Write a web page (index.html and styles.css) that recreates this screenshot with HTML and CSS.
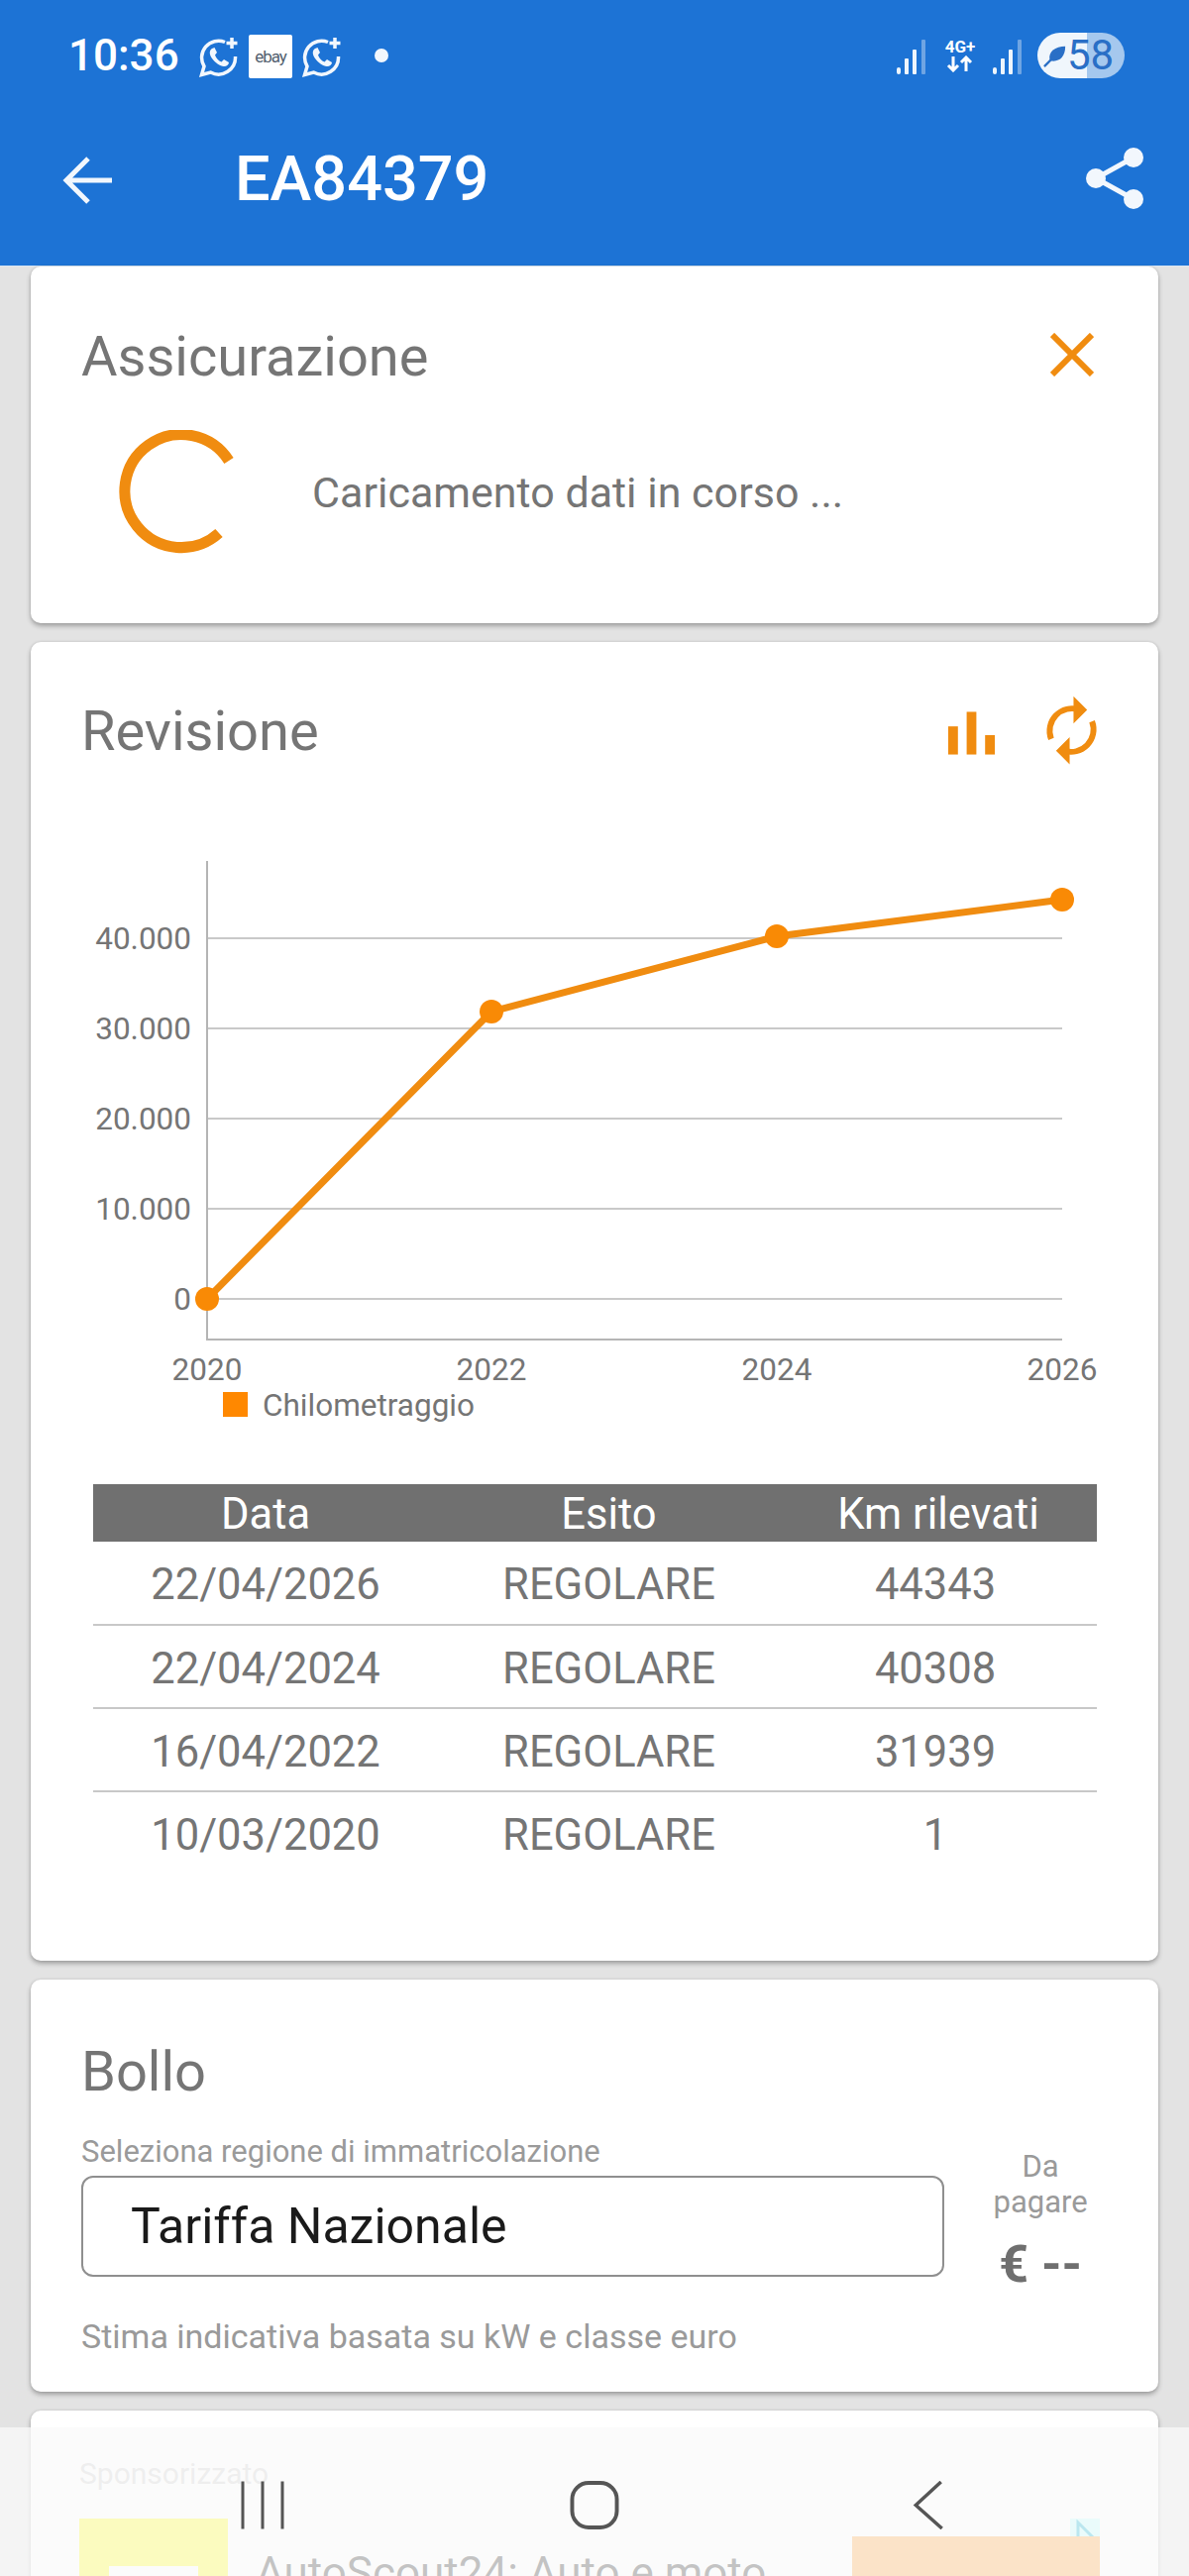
FILE: index.html
```html
<!DOCTYPE html>
<html lang="it">
<head>
  <meta charset="UTF-8">
  <meta name="viewport" content="width=device-width, initial-scale=1">
  <title>EA84379</title>
  <link rel="stylesheet" href="styles.css">
</head>
<body>
  <header class="app-bar">
    <div class="status-bar">
      <span class="clock">10:36</span>
      <svg class="notif notif-wa" viewBox="0 0 42 42">
        <path class="wa-line" d="M27 5.500A17 17 0 0 0 6 30L3.500 38.500 12.500 36A17 17 0 0 0 37.500 20"/>
        <path class="wa-fill" d="M14 12c-3 2-3 6 0 10s8 8 12 8c3 0 5-2 5-4l-5-3-2.500 2.500c-3-1-5.500-4-6.500-7l2-2.500-2.500-5z"/>
        <path class="wa-line" d="M34 1v11M28.500 6.500h11"/>
      </svg>
      <span class="ebay-icon">ebay</span>
      <svg class="notif notif-wa-2" viewBox="0 0 42 42">
        <path class="wa-line" d="M27 5.500A17 17 0 0 0 6 30L3.500 38.500 12.500 36A17 17 0 0 0 37.500 20"/>
        <path class="wa-fill" d="M14 12c-3 2-3 6 0 10s8 8 12 8c3 0 5-2 5-4l-5-3-2.500 2.500c-3-1-5.500-4-6.500-7l2-2.500-2.500-5z"/>
        <path class="wa-line" d="M34 1v11M28.500 6.500h11"/>
      </svg>
      <span class="dot"></span>
      <span class="spacer"></span>
      <svg class="signal" viewBox="0 0 31 36">
        <rect x="0" y="28" width="4" height="7" rx="2"/>
        <rect x="8" y="19" width="4" height="16" rx="1"/>
        <rect x="16" y="10" width="4" height="25" rx="1"/>
        <rect class="signal-off" x="25" y="0" width="4" height="35" rx="1"/>
      </svg>
      <div class="net">
        <span class="net-label">4G+</span>
        <svg class="net-arrows" viewBox="0 0 30 17">
          <path d="M8 1v14M3 10l5 5 5-5M21 16V2M16 7l5-5 5 5"/>
        </svg>
      </div>
      <svg class="signal" viewBox="0 0 31 36">
        <rect x="0" y="28" width="4" height="7" rx="2"/>
        <rect x="8" y="19" width="4" height="16" rx="1"/>
        <rect x="16" y="10" width="4" height="25" rx="1"/>
        <rect class="signal-off" x="25" y="0" width="4" height="35" rx="1"/>
      </svg>
      <div class="battery">
        <svg class="leaf" viewBox="0 0 26 26">
          <path d="M7 18C5 9 13 3 24 3c0 11-6 17-15 16z"/>
          <path class="leaf-stem" d="M1 25L17 9"/>
        </svg>
        <span class="battery-num">58</span>
      </div>
    </div>
    <div class="title-bar">
      <svg class="back" viewBox="0 0 52 52">
        <path d="M50 26H5M26 4L4 26l22 22"/>
      </svg>
      <h1 class="plate">EA84379</h1>
      <svg class="share" viewBox="0 0 58 64">
        <path class="share-lines" d="M48 11L10 32l38 21"/>
        <circle cx="48" cy="11" r="10"/>
        <circle cx="10" cy="32" r="10"/>
        <circle cx="48" cy="53" r="10"/>
      </svg>
    </div>
  </header>

  <main class="cards">
    <section class="card card-insurance">
      <div class="card-head">
        <h2>Assicurazione</h2>
        <svg class="icon-close" viewBox="0 0 44 44">
          <path d="M2 2l40 40M42 2L2 42"/>
        </svg>
      </div>
      <div class="loading">
        <svg class="spinner" viewBox="0 0 126 126">
          <path d="M112 31A57 57 0 1 0 102 104"/>
        </svg>
        <span>Caricamento dati in corso ...</span>
      </div>
    </section>

    <section class="card card-revision">
      <div class="card-head">
        <h2>Revisione</h2>
        <div class="head-icons">
          <svg class="icon-bars" viewBox="0 0 48 44">
            <rect x="0" y="15" width="10" height="29"/>
            <rect x="19" y="0" width="10" height="44"/>
            <rect x="38" y="24" width="10" height="20"/>
          </svg>
          <svg class="icon-refresh" viewBox="0 0 56 70">
            <path class="refresh-arc" d="M7 44A23 23 0 0 1 36 14M49 26A23 23 0 0 1 20 56"/>
            <path d="M30 0l14 14-14 14zM26 42L12 56l14 14z"/>
          </svg>
        </div>
      </div>
      <svg class="chart" viewBox="31 860 1138 580">
        <g class="chart-grid">
          <path d="M209 950H1072M209 1041H1072M209 1132H1072M209 1223H1072M209 1314H1072"/>
        </g>
        <path class="chart-axis" d="M209 872V1355H1072"/>
        <path class="chart-line" d="M209 1314L496 1024 784 948 1072 911"/>
        <g class="chart-dots">
          <circle cx="209" cy="1314" r="12"/>
          <circle cx="496" cy="1024" r="12"/>
          <circle cx="784" cy="948" r="12"/>
          <circle cx="1072" cy="911" r="12"/>
        </g>
        <g class="chart-y">
          <text x="193" y="961">40.000</text>
          <text x="193" y="1052">30.000</text>
          <text x="193" y="1143">20.000</text>
          <text x="193" y="1234">10.000</text>
          <text x="193" y="1325">0</text>
        </g>
        <g class="chart-x">
          <text x="209" y="1396">2020</text>
          <text x="496" y="1396">2022</text>
          <text x="784" y="1396">2024</text>
          <text x="1072" y="1396">2026</text>
        </g>
        <rect class="chart-key" x="225" y="1408" width="25" height="25"/>
        <text class="chart-legend" x="265" y="1432">Chilometraggio</text>
      </svg>
      <table class="km-table">
        <thead>
          <tr><th>Data</th><th>Esito</th><th>Km rilevati</th></tr>
        </thead>
        <tbody>
          <tr><td>22/04/2026</td><td>REGOLARE</td><td>44343</td></tr>
          <tr><td>22/04/2024</td><td>REGOLARE</td><td>40308</td></tr>
          <tr><td>16/04/2022</td><td>REGOLARE</td><td>31939</td></tr>
          <tr><td>10/03/2020</td><td>REGOLARE</td><td>1</td></tr>
        </tbody>
      </table>
    </section>

    <section class="card card-tax">
      <h2>Bollo</h2>
      <div class="tax-row">
        <div class="tax-left">
          <div class="tax-label">Seleziona regione di immatricolazione</div>
          <div class="tax-select">Tariffa Nazionale</div>
        </div>
        <div class="tax-right">
          <div class="tax-pay">Da pagare</div>
          <div class="tax-amount">€ --</div>
        </div>
      </div>
      <div class="tax-note">Stima indicativa basata su kW e classe euro</div>
    </section>

    <section class="card card-ad">
      <div class="ad-label">Sponsorizzato</div>
      <div class="ad-row">
        <div class="ad-logo"><span>Auto</span></div>
        <div class="ad-title">AutoScout24: Auto e moto</div>
        <div class="ad-side">
          <svg class="ad-choice" viewBox="0 0 30 40">
            <path d="M8 4v32l16-16z"/>
          </svg>
          <div class="ad-button"></div>
        </div>
      </div>
    </section>
  </main>

  <nav class="nav-bar">
    <svg class="nav-recent" viewBox="0 0 44 48">
      <path d="M2 0v48M22 0v48M42 0v48"/>
    </svg>
    <svg class="nav-home" viewBox="0 0 50 50">
      <rect x="2" y="2" width="46" height="46" rx="17"/>
    </svg>
    <svg class="nav-back" viewBox="0 0 32 50">
      <path d="M29 1L3 25l27 24"/>
    </svg>
  </nav>
</body>
</html>
```

FILE: styles.css
```css
* {
  box-sizing: border-box;
}

html {
  height: 2600px;
  overflow: hidden;
}

body {
  margin: 0;
  width: 1200px;
  height: 2600px;
  overflow: hidden;
  position: relative;
  background: #e3e3e3;
  font-family: Roboto, "Liberation Sans", sans-serif;
  color: #757575;
}

h1, h2 {
  margin: 0;
  font-weight: 400;
}

/* header */

.app-bar {
  height: 269px;
  background: #1d73d5;
  color: #fff;
  border-bottom: 1px solid #d9e6f4;
}

.status-bar {
  height: 110px;
  padding: 33px 65px 0 69px;
  display: flex;
  align-items: flex-start;
}

.clock {
  font-size: 44px;
  font-weight: 500;
  line-height: 46px;
  width: 131px;
}

.notif {
  width: 42px;
  height: 42px;
  margin-top: 4px;
}

.wa-line {
  fill: none;
  stroke: #f2f7fd;
  stroke-width: 3.500;
}

.wa-fill {
  fill: #f2f7fd;
}

.ebay-icon {
  width: 44px;
  height: 44px;
  margin: 2px 9px 0 9px;
  background: #fff;
  border-radius: 2px;
  color: #52606e;
  font-size: 17px;
  letter-spacing: -1px;
  line-height: 44px;
  text-align: center;
}

.dot {
  width: 14px;
  height: 14px;
  margin: 16px 0 0 32px;
  border-radius: 50%;
  background: #f2f7fd;
}

.spacer {
  flex: 1;
}

.signal {
  width: 31px;
  height: 36px;
  margin-top: 7px;
  fill: #eef5fc;
}

.signal-off {
  fill: #6fa5e3;
}

.net {
  width: 38px;
  margin: 5px 14px 0 14px;
  display: flex;
  flex-direction: column;
  align-items: center;
}

.net-label {
  font-size: 17px;
  font-weight: 700;
  line-height: 18px;
}

.net-arrows {
  width: 30px;
  height: 17px;
  fill: none;
  stroke: #fff;
  stroke-width: 3;
}

.battery {
  width: 88px;
  height: 46px;
  margin-left: 14px;
  display: flex;
  align-items: center;
  padding-left: 6px;
  border-radius: 23px;
  background: linear-gradient(to right, #f0f6fc 57%, #a5c8ee 57%);
}

.leaf {
  width: 24px;
  height: 24px;
  fill: #2a6fc6;
}

.leaf-stem {
  fill: none;
  stroke: #2a6fc6;
  stroke-width: 2.500;
}

.battery-num {
  font-size: 42px;
  line-height: 46px;
  color: #2a6fc6;
}

.title-bar {
  height: 158px;
  padding: 36px 46px 0 63px;
  display: flex;
  align-items: flex-start;
}

.back {
  width: 52px;
  height: 52px;
  margin-top: 10px;
  fill: none;
  stroke: #f2f7fd;
  stroke-width: 5;
}

.plate {
  flex: 1;
  margin-left: 122px;
  font-size: 63px;
  font-weight: 500;
  line-height: 70px;
}

.share {
  width: 58px;
  height: 64px;
  margin-top: 2px;
  fill: #f2f7fd;
}

.share-lines {
  fill: none;
  stroke: #f2f7fd;
  stroke-width: 5;
}

/* cards */

.cards {
  padding: 0 31px;
  display: flex;
  flex-direction: column;
  gap: 19px;
}

.card {
  background: #fff;
  border-radius: 10px;
  box-shadow: 0 3px 5px rgba(0, 0, 0, 0.28), 0 0 3px rgba(0, 0, 0, 0.12);
}

.card h2 {
  font-size: 56px;
  line-height: 66px;
  color: #757575;
}

.card-head {
  display: flex;
  justify-content: space-between;
  align-items: flex-start;
}

.card-insurance {
  height: 360px;
  padding: 58px 65px 0 51px;
}

.icon-close {
  width: 44px;
  height: 44px;
  margin-top: 9px;
  fill: none;
  stroke: #f08c10;
  stroke-width: 6;
}

.loading {
  display: flex;
  align-items: center;
  font-size: 43px;
  margin-top: 41px;
  padding-left: 37px;
}

.spinner {
  width: 126px;
  height: 126px;
  fill: none;
  stroke: #f08c10;
  stroke-width: 11;
  margin-right: 70px;
}

.card-revision {
  height: 1331px;
  padding: 57px 60px 0 51px;
}

.head-icons {
  display: flex;
  align-items: center;
  gap: 50px;
  margin-top: -3px;
}

.icon-bars {
  width: 47px;
  height: 44px;
  margin-top: 6px;
  fill: #f08c10;
}

.icon-refresh {
  width: 55px;
  height: 70px;
  fill: #f08c10;
}

.refresh-arc {
  fill: none;
  stroke: #f08c10;
  stroke-width: 6;
}

.chart {
  display: block;
  width: 1138px;
  height: 580px;
  margin: 85px 0 0 -51px;
}

.chart-grid path {
  fill: none;
  stroke: #c9c9c9;
  stroke-width: 2;
}

.chart-axis {
  fill: none;
  stroke: #b5b5b5;
  stroke-width: 2;
}

.chart-line {
  fill: none;
  stroke: #f08c10;
  stroke-width: 7;
}

.chart-dots {
  fill: #f98a05;
}

.chart-y text,
.chart-x text,
.chart-legend {
  font-family: Roboto, sans-serif;
  font-size: 31.500px;
  fill: #757575;
}

.chart-y text {
  text-anchor: end;
}

.chart-x text {
  text-anchor: middle;
}

.chart-key {
  fill: #ff8800;
}

.km-table {
  width: 1013px;
  margin: 61px 0 0 12px;
  border-collapse: collapse;
  table-layout: fixed;
  font-size: 43.500px;
  text-align: center;
}

.km-table th {
  height: 58px;
  padding: 2px 0 0 0;
  font-weight: 400;
  background: #707070;
  color: #fff;
}

.km-table th:nth-child(1), .km-table td:nth-child(1) {
  width: 348px;
}

.km-table th:nth-child(2), .km-table td:nth-child(2) {
  width: 345px;
}

.km-table td {
  height: 84px;
  padding: 4px 0 0 0;
  border-bottom: 2px solid #c8c8c8;
}

.km-table td:nth-child(3) {
  padding-right: 6px;
}

.km-table tbody tr:last-child td {
  border-bottom: none;
}

.card-tax {
  height: 416px;
  padding: 60px 50px 0 51px;
}

.tax-row {
  display: flex;
  align-items: flex-start;
  gap: 28px;
  margin-top: 30px;
}

.tax-left {
  width: 872px;
}

.tax-label {
  font-size: 31px;
  line-height: 36px;
  color: #9a9a9a;
}

.tax-select {
  height: 102px;
  margin-top: 6px;
  padding-left: 48px;
  border: 2px solid #8f8f8f;
  border-radius: 12px;
  color: #1a1a1a;
  font-size: 50px;
  line-height: 98px;
}

.tax-right {
  width: 138px;
  text-align: center;
}

.tax-pay {
  margin-top: 15px;
  font-size: 31px;
  line-height: 36px;
  color: #9a9a9a;
}

.tax-amount {
  margin-top: 17px;
  font-size: 52px;
  font-weight: 700;
  line-height: 56px;
  color: #6f6f6f;
}

.tax-note {
  margin-top: 25px;
  font-size: 34px;
  line-height: 38px;
  color: #9a9a9a;
}

.card-ad {
  height: 300px;
  padding: 46px 59px 0 49px;
}

.ad-label {
  font-size: 30px;
  line-height: 36px;
  color: #cacaca;
}

.ad-row {
  display: flex;
  margin-top: 27px;
}

.ad-logo {
  width: 150px;
  height: 150px;
  padding: 48px 0 0 30px;
  background: #ffff10;
}

.ad-logo span {
  display: block;
  width: 90px;
  height: 90px;
  background: #fff;
  color: #333;
  font-size: 34px;
  text-align: center;
  line-height: 60px;
}

.ad-title {
  flex: 1;
  margin: 30px 0 0 28px;
  font-size: 44px;
  line-height: 50px;
  color: #222;
  white-space: nowrap;
}

.ad-side {
  width: 250px;
  flex-shrink: 0;
  display: flex;
  flex-direction: column;
  align-items: flex-end;
}

.ad-choice {
  width: 30px;
  height: 40px;
  background: #baffff;
  fill: none;
  stroke: #00aecd;
  stroke-width: 3;
}

.ad-button {
  width: 250px;
  height: 80px;
  margin-top: -22px;
  background: #ff9e36;
}

/* system nav, lies over the page */

.nav-bar {
  position: absolute;
  left: 0;
  right: 0;
  bottom: 0;
  height: 150px;
  background: rgba(250, 250, 250, 0.75);
}

.nav-bar svg {
  position: absolute;
  top: 54px;
  height: 49px;
  fill: none;
  stroke: #555;
}

.nav-recent {
  left: 243px;
  width: 44px;
  stroke-width: 3;
}

.nav-home {
  left: 575px;
  width: 50px;
  stroke-width: 4;
}

.nav-back {
  left: 921px;
  width: 32px;
  stroke-width: 3.500;
}
```
